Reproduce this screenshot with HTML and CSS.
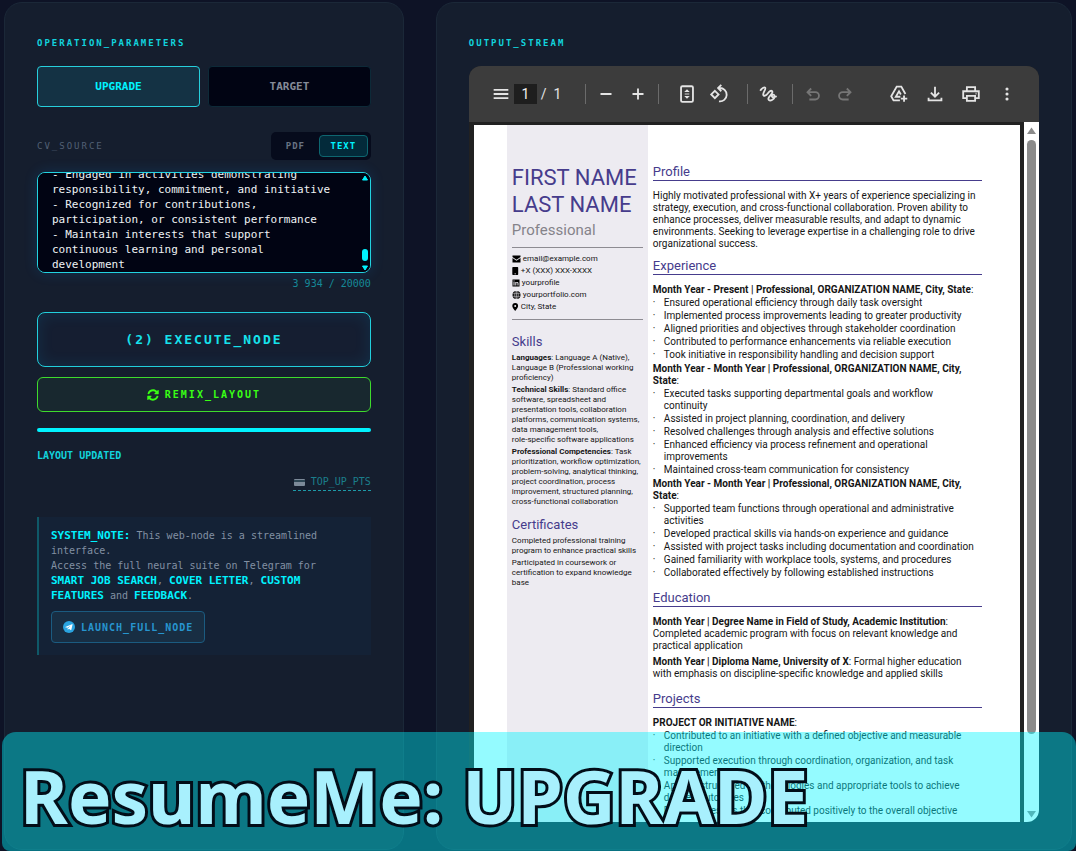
FILE: index.html
```
<!DOCTYPE html>
<html lang="en">
<head>
<meta charset="UTF-8">
<meta name="viewport" content="width=device-width, initial-scale=1.0">
<title>ResumeMe</title>
<link rel="stylesheet" href="styles.css">
</head>
<body>

<div class="app">
    <section class="panel controls">
        <h2 class="panel-title">OPERATION_PARAMETERS</h2>

        <div class="modes">
            <button class="mode active" type="button">UPGRADE</button>
            <button class="mode" type="button">TARGET</button>
        </div>

        <div class="source-row">
            <label for="cv-text">CV_SOURCE</label>
            <div class="toggle">
                <button type="button">PDF</button>
                <button class="active" type="button">TEXT</button>
            </div>
        </div>

        <div class="source-box">
            <textarea id="cv-text" spellcheck="false">- Engaged in activities demonstrating responsibility, commitment, and initiative
- Recognized for contributions, participation, or consistent performance
- Maintain interests that support continuous learning and personal development</textarea>
            <div class="source-scroll">
                <svg width="8" height="6" viewBox="0 0 8 6"><path d="M4 1L6.500 5H1.500z" fill="currentColor" stroke="currentColor" stroke-linejoin="round"/></svg>
                <span class="source-thumb"></span>
                <svg width="8" height="6" viewBox="0 0 8 6"><path d="M4 5L6.500 1H1.500z" fill="currentColor" stroke="currentColor" stroke-linejoin="round"/></svg>
            </div>
        </div>
        <p class="counter">3 934 / 20000</p>

        <button class="execute" type="button">(2) EXECUTE_NODE</button>
        <button class="remix" type="button">
            <svg width="12" height="12" viewBox="0 0 512 512" fill="currentColor"><path d="M105 203c22-62 82-107 151-107 45 0 84 18 113 47l-47 47c-14 14-4 34 14 34h145c11 0 20-9 20-20V59c0-18-21-29-35-15l-39 39C386 41 325 12 256 12 149 12 59 81 26 177c-6 16 3 32 19 36l25 6c15 4 30-3 35-16zM407 309c-22 62-82 107-151 107-45 0-84-18-113-47l47-47c14-14 4-34-14-34H31c-11 0-20 9-20 20v145c0 18 21 29 35 15l39-39c41 42 102 71 171 71 107 0 197-69 230-165 6-16-3-32-19-36l-25-6c-15-4-30 3-35 16z"/></svg>
            <span>REMIX_LAYOUT</span>
        </button>

        <div class="progress"></div>
        <p class="status">LAYOUT UPDATED</p>

        <a class="top-up" href="#">
            <svg width="11" height="7" viewBox="0 0 11 7"><rect width="11" height="7" rx="1" fill="#7c8a99"/><rect y="1" width="11" height="2" fill="#2d4654"/></svg>
            <span>TOP_UP_PTS</span>
        </a>

        <div class="note">
            <p><strong>SYSTEM_NOTE:</strong> This web-node is a streamlined interface.<br>
            Access the full neural suite on Telegram for <strong>SMART JOB SEARCH</strong>, <strong>COVER LETTER</strong>, <strong>CUSTOM FEATURES</strong> and <strong>FEEDBACK</strong>.</p>
            <a class="launch" href="#">
                <svg width="12" height="12" viewBox="0 0 24 24"><circle cx="12" cy="12" r="12" fill="#2aa4e0"/><path d="M4.500 11.800L18 6.300c.8-.2 1.200.2 1 1l-2.300 10.200c-.2.8-.7 1-1.400.6l-3.300-2.500-1.700 1.600c-.4.3-.8.2-.9-.3l-.5-3.400-4.300-1.200c-.6-.2-.6-.4-.1-.5z" fill="#fff"/><path d="M9 13.500l6.500-4.500-5.300 5.300-.4 2.500z" fill="#2aa4e0"/></svg>
                <span>LAUNCH_FULL_NODE</span>
            </a>
        </div>
    </section>

    <section class="panel output">
        <h2 class="panel-title">OUTPUT_STREAM</h2>

        <div class="viewer">
            <div class="toolbar">
                <button type="button" aria-label="Menu"><svg width="24" height="24" viewBox="0 0 24 24"><path d="M4 7.500h16M4 12h16M4 16.500h16"/></svg></button>
                <input class="page-number" type="text" value="1" aria-label="Page number">
                <span class="page-total">/&nbsp; 1</span>
                <span class="divider"></span>
                <button type="button" aria-label="Zoom out"><svg width="24" height="24" viewBox="0 0 24 24"><path d="M6 12h12"/></svg></button>
                <button type="button" aria-label="Zoom in"><svg width="24" height="24" viewBox="0 0 24 24"><path d="M6 12h12M12 6v12"/></svg></button>
                <span class="divider"></span>
                <button class="fit" type="button" aria-label="Fit to page"><svg width="24" height="24" viewBox="0 0 24 24"><rect x="5.500" y="3.500" width="13" height="17" rx="1.500"/><path d="M9.500 12h5" stroke-width="1"/><path d="M9 9.700h6l-3-3zM9 14.300h6l-3 3z" class="solid"/></svg></button>
                <button class="rotate" type="button" aria-label="Rotate"><svg width="24" height="24" viewBox="0 0 24 24"><path d="M7.500 8.500l4 4-4 4-4-4z"/><path d="M11 5.500h1.500a7.300 7.300 0 1 1-.5 14.500M14.500 2L11 5.500 14.500 9"/></svg></button>
                <span class="divider"></span>
                <button class="draw" type="button" aria-label="Draw"><svg width="24" height="24" viewBox="0 0 24 24"><path d="M3.500 8.500C5 6 8 4 9 5.200s-2.800 6-2.200 7.800 3 .8 4.700-1.300 3.500-4 4.800-2.900-.3 3.400-1.900 5-2.800 4-1.200 5 6-1.300 6-4-2.800-2.600-3-.8 2.400 2 5.300.5"/></svg></button>
                <span class="divider"></span>
                <button class="dim" type="button" aria-label="Undo"><svg width="24" height="24" viewBox="0 0 24 24"><path d="M10 6l-4 4 4 4M6 10h8.500a4 4 0 0 1 0 8H8"/></svg></button>
                <button class="dim" type="button" aria-label="Redo"><svg width="24" height="24" viewBox="0 0 24 24"><path d="M14 6l4 4-4 4M18 10H9.500a4 4 0 0 0 0 8H16"/></svg></button>
                <span class="spacer"></span>
                <button type="button" aria-label="Save to Drive"><svg width="24" height="24" viewBox="0 0 24 24"><path d="M13 19H6l-2.500-4.500L9.500 4h5l4.500 8"/><path d="M13.500 15H8.500l3.500-6 2 3.500M17.500 13.500v7M14 17h7"/></svg></button>
                <button type="button" aria-label="Download"><svg width="24" height="24" viewBox="0 0 24 24"><path d="M12 4v11M7.500 10.500L12 15l4.500-4.500M5 16v3h14v-3"/></svg></button>
                <button type="button" aria-label="Print"><svg width="24" height="24" viewBox="0 0 24 24"><path d="M7.500 8V4.500h9V8M7 16.500H3.500V9h17v7.500H17"/><path d="M7.500 14h9v5.500h-9zM17 11.500h1"/></svg></button>
                <button type="button" aria-label="More"><svg width="24" height="24" viewBox="0 0 24 24"><g class="solid"><circle cx="12" cy="6.500" r="1.700"/><circle cx="12" cy="12" r="1.700"/><circle cx="12" cy="17.500" r="1.700"/></g></svg></button>
            </div>

            <div class="stage">
                <article class="page">
                    <aside class="side">
                        <h1>FIRST NAME LAST NAME</h1>
                        <p class="job-title">Professional</p>
                        <ul class="contacts">
                            <li><svg width="9" height="8" viewBox="0 0 9 8"><path d="M0.500 0.500h8v1.500l-4 2.800-4-2.800zM0.500 3l4 2.800 4-2.800v4.500h-8z"/></svg>email@example.com</li>
                            <li><svg width="7" height="8" viewBox="0 0 7 8"><path d="M1 0h4.500q.7 0 .7.700v6.600q0 .7-.7.700H1q-.7 0-.7-.7V.700Q.3 0 1 0zM2.500 6.500v.7H4v-.7z"/></svg>+X (XXX) XXX-XXXX</li>
                            <li><svg width="8" height="8" viewBox="0 0 8 8"><path fill-rule="evenodd" d="M0.500 0.500h7v7h-7zM1.500 3v3.500h1V3zM1.500 1.500v1h1v-1zM3.300 3v3.500h1V4.300q.3-.5.7-.5.500 0 .5.700v2h1V4.200Q6.300 3 5.300 3q-.6 0-1 .5V3z"/></svg>yourprofile</li>
                            <li><svg width="9" height="8" viewBox="0 0 9 8"><circle cx="4.500" cy="4" r="4"/><path d="M.5 2.700h8M.5 5.300h8M4.500 0v8" stroke="#edebf1" stroke-width=".5"/><ellipse cx="4.500" cy="4" rx="1.800" ry="4" fill="none" stroke="#edebf1" stroke-width=".5"/></svg>yourportfolio.com</li>
                            <li><svg width="7" height="8" viewBox="0 0 7 8"><path fill-rule="evenodd" d="M3.200 8C1.500 5.800.3 4.500.3 3a2.900 2.900 0 0 1 5.800 0C6.100 4.500 4.900 5.800 3.200 8zM3.200 2a1 1 0 1 0 0 2 1 1 0 0 0 0-2z"/></svg>City, State</li>
                        </ul>

                        <h3>Skills</h3>
                        <p><b>Languages</b>: Language A (Native), Language B (Professional working proficiency)</p>
                        <p><b>Technical Skills</b>: Standard office software, spreadsheet and presentation tools, collaboration platforms, communication systems, data management tools, <span class="keep">role-specific software applications</span></p>
                        <p><b>Professional Competencies</b>: Task prioritization, workflow optimization, problem-solving, analytical thinking, project coordination, process improvement, structured planning, cross-functional collaboration</p>

                        <h3>Certificates</h3>
                        <p>Completed professional training program to enhance practical skills</p>
                        <p>Participated in coursework or certification to expand knowledge base</p>
                    </aside>

                    <div class="main">
                        <h3>Profile</h3>
                        <p>Highly motivated professional with X+ years of experience specializing in strategy, execution, and cross-functional collaboration. Proven ability to enhance processes, deliver measurable results, and adapt to dynamic environments. Seeking to leverage expertise in a challenging role to drive organizational success.</p>

                        <h3>Experience</h3>
                        <h4>Month Year - Present | Professional, ORGANIZATION NAME, City, State<span>:</span></h4>
                        <ul>
                            <li>Ensured operational efficiency through daily task oversight</li>
                            <li>Implemented process improvements leading to greater productivity</li>
                            <li>Aligned priorities and objectives through stakeholder coordination</li>
                            <li>Contributed to performance enhancements via reliable execution</li>
                            <li>Took initiative in responsibility handling and decision support</li>
                        </ul>
                        <h4>Month Year - Month Year | Professional, ORGANIZATION NAME, City, State<span>:</span></h4>
                        <ul>
                            <li>Executed tasks supporting departmental goals and workflow continuity</li>
                            <li>Assisted in project planning, coordination, and delivery</li>
                            <li>Resolved challenges through analysis and effective solutions</li>
                            <li>Enhanced efficiency via process refinement and operational improvements</li>
                            <li>Maintained cross-team communication for consistency</li>
                        </ul>
                        <h4>Month Year - Month Year | Professional, ORGANIZATION NAME, City, State<span>:</span></h4>
                        <ul>
                            <li>Supported team functions through operational and administrative activities</li>
                            <li>Developed practical skills via hands-on experience and guidance</li>
                            <li>Assisted with project tasks including documentation and coordination</li>
                            <li>Gained familiarity with workplace tools, systems, and procedures</li>
                            <li>Collaborated effectively by following established instructions</li>
                        </ul>

                        <h3>Education</h3>
                        <p class="school"><b>Month Year | Degree Name in Field of Study, Academic Institution</b>: Completed academic program with focus on relevant knowledge and practical application</p>
                        <p class="school"><b>Month Year | Diploma Name, University of X</b>: Formal higher education with emphasis on discipline-specific knowledge and applied skills</p>

                        <h3>Projects</h3>
                        <h4>PROJECT OR INITIATIVE NAME<span>:</span></h4>
                        <ul>
                            <li>Contributed to an initiative with a defined objective and measurable direction</li>
                            <li>Supported execution through coordination, organization, and task management</li>
                            <li>Applied structured methodologies and appropriate tools to achieve defined outcomes</li>
                            <li>Delivered results that contributed positively to the overall objective</li>
                        </ul>
                    </div>
                </article>
                <div class="page-scroll">
                    <svg width="9" height="7" viewBox="0 0 9 7"><path d="M4.500 0.500L9 7H0z"/></svg>
                    <span class="page-thumb"></span>
                    <svg width="9" height="7" viewBox="0 0 9 7"><path d="M4.500 6.500L9 0H0z"/></svg>
                </div>
            </div>
        </div>
    </section>
</div>

<div class="banner">ResumeMe: UPGRADE</div>

<script>
    // keep the end of the pasted CV in view
    var cvText = document.getElementById("cv-text");
    cvText.scrollTop = cvText.scrollHeight;
</script>

</body>
</html>
```
FILE: styles.css
```
* {
    box-sizing: border-box;
}
body {
    margin: 0;
    background-color: #0e1326;
    font-family: "DejaVu Sans Mono", monospace;
    font-size: 10px;
    color: #8290a3;
}
h1, h2, h3, h4, p, ul {
    margin: 0;
    padding: 0;
}
button {
    font-family: inherit;
    padding: 0;
    cursor: pointer;
}
a {
    text-decoration: none;
}
.app {
    display: grid;
    grid-template-columns: 22fr 35fr;
    gap: 32px;
    height: 100vh;
    padding: 2px 4px 1px;
}
.panel {
    display: flex;
    flex-direction: column;
    min-width: 0;
    min-height: 0;
    padding: 32px 32px 27px;
    border: 1px solid #1b2838;
    border-radius: 18px;
    background-color: #151e2e;
}
.panel-title {
    margin-bottom: 15px;
    font-size: 9px;
    line-height: 16px;
    letter-spacing: 2px;
    color: #12d3dd;
}

/* left panel */
.modes {
    display: grid;
    grid-template-columns: 1fr 1fr;
    gap: 8px;
}
.mode {
    height: 41px;
    border: 1px solid #0d2a38;
    border-radius: 4px;
    background-color: #010413;
    color: #858b98;
    font-size: 11px;
    font-weight: bold;
}
.mode.active {
    border-color: #27cfdc;
    background-color: #143244;
    color: #00f3ff;
}
.source-row {
    display: flex;
    justify-content: space-between;
    align-items: center;
    margin: 25px 0 12px;
    font-size: 9px;
    letter-spacing: 2px;
    color: #526075;
}
.toggle {
    display: flex;
    gap: 2px;
    padding: 3px;
    border-radius: 5px;
    background-color: #060b1c;
}
.toggle button {
    width: 43px;
    height: 22px;
    border: 1px solid transparent;
    border-radius: 4px;
    background: none;
    color: #697383;
    font-size: 9px;
    font-weight: bold;
    letter-spacing: 1px;
}
.toggle button.active {
    width: 49px;
    border-color: #0e6670;
    background-color: #032a3a;
    color: #00f3ff;
}
.source-box {
    position: relative;
    height: 101px;
    border-radius: 8px;
    box-shadow: 0 0 14px rgba(0, 140, 255, 0.16);
}
.source-box textarea {
    display: block;
    width: 100%;
    height: 100%;
    padding: 0 33px 0 14px;
    border: 1px solid #22d3e0;
    border-radius: 8px;
    outline: none;
    resize: none;
    scrollbar-width: none;
    background-color: #010413;
    color: #eef2f4;
    font-family: inherit;
    font-size: 11px;
    line-height: 15px;
}
.source-scroll {
    position: absolute;
    top: 3px;
    right: 2px;
    bottom: 2px;
    display: flex;
    flex-direction: column;
    align-items: center;
    gap: 4px;
    color: #00f3ff;
}
.source-thumb {
    width: 6px;
    height: 12px;
    margin-top: auto;
    border-radius: 3px;
    background-color: #00f3ff;
}
.counter {
    margin: 4px 0 21px;
    line-height: 14px;
    text-align: right;
    color: #168a98;
}
.execute {
    height: 55px;
    margin-bottom: 10px;
    border: 1px solid #22cfdc;
    border-radius: 8px;
    background-color: #151e31;
    box-shadow: inset 0 0 16px rgba(0, 180, 255, 0.12);
    color: #16e2ec;
    font-size: 13px;
    font-weight: bold;
    letter-spacing: 2px;
}
.remix {
    display: flex;
    justify-content: center;
    align-items: center;
    gap: 6px;
    height: 35px;
    border: 1px solid #3edb2d;
    border-radius: 6px;
    background-color: #18282f;
    color: #39ff14;
    font-size: 10px;
    font-weight: bold;
    letter-spacing: 2px;
}
.progress {
    height: 4px;
    margin: 16px 0;
    border-radius: 2px;
    background-color: #00f3ff;
}
.status {
    line-height: 16px;
    color: #12d3dd;
    font-weight: bold;
}
.top-up {
    display: flex;
    align-items: center;
    align-self: flex-end;
    gap: 6px;
    margin: 10px 0 26px;
    padding-left: 1px;
    border-bottom: 1px dashed #1d9aa8;
    line-height: 16px;
    color: #1b7e8c;
}
.note {
    padding: 11px 28px 12px 12px;
    border-left: 2px solid #0f5968;
    background-color: #142236;
}
.note p {
    margin-bottom: 8px;
    line-height: 15px;
}
.note strong {
    font-size: 11px;
    line-height: 14px;
    color: #00f3ff;
}
.launch {
    display: inline-flex;
    align-items: center;
    gap: 6px;
    height: 32px;
    padding: 0 11px;
    border: 1px solid #1b5b80;
    border-radius: 4px;
    background-color: #182e43;
    color: #2795cf;
    font-weight: bold;
    letter-spacing: 1px;
}

/* pdf viewer */
.viewer {
    display: flex;
    flex-direction: column;
    flex: 1;
    min-height: 0;
    overflow: hidden;
    border-radius: 12px;
    background-color: #212121;
    font-family: Roboto, sans-serif;
}
.toolbar {
    display: flex;
    align-items: center;
    flex: none;
    height: 56px;
    padding: 0 22px 0 20px;
    background-color: #3c3c3c;
    color: #e4e4e4;
}
.toolbar button {
    flex: none;
    width: 24px;
    height: 24px;
    margin-right: 8px;
    border: 0;
    background: none;
    color: #e4e4e4;
}
.toolbar button:first-child {
    margin-right: 1px;
}
.toolbar button:last-child {
    margin-right: -2px;
}
.toolbar button:nth-last-child(-n+4):not(:last-child) {
    margin-right: 12px;
}
.toolbar .dim {
    color: #767676;
}
.toolbar .fit {
    margin-left: 8px;
}
.toolbar .rotate {
    margin-right: 16px;
}
.toolbar .draw {
    margin-right: 12px;
}
.toolbar svg {
    display: block;
    width: 22px;
    height: 22px;
    margin: 1px;
    fill: none;
    stroke: currentColor;
    stroke-width: 2;
}
.toolbar .solid {
    fill: currentColor;
    stroke: none;
}
.page-number {
    width: 23px;
    height: 20px;
    padding: 0;
    border: 0;
    background-color: #1e1e1e;
    color: #f1f1f1;
    font-family: inherit;
    font-size: 14px;
    text-align: center;
}
.page-total {
    margin: 0 24px 0 4px;
    font-size: 14px;
}
.divider {
    width: 1px;
    height: 20px;
    margin-right: 8px;
    background-color: #6b6b6b;
}
.spacer {
    flex: 1;
}
.stage {
    display: flex;
    flex: 1;
    min-height: 0;
    gap: 4px;
    padding-left: 5px;
}
.page {
    display: grid;
    grid-template-columns: 141px 1fr;
    flex: 1;
    margin-top: 3px;
    padding: 0 38px 0 33px;
    overflow: hidden;
    background-color: #fff;
    color: #151515;
}
.page h3 {
    font-size: 13px;
    font-weight: normal;
    line-height: 16px;
    color: #463c8c;
}
.page ul {
    list-style: none;
}
.side {
    padding: 39px 5px 0;
    background-color: #edebf1;
    font-size: 8px;
    line-height: 10px;
}
.side h1 {
    font-size: 22px;
    font-weight: normal;
    line-height: 27px;
    color: #463c8c;
}
.side .job-title {
    margin: 0;
    padding: 3px 0 8px;
    border-bottom: 1px solid #8d8b92;
    font-size: 15px;
    line-height: 18px;
    color: #85838a;
}
.side .contacts {
    margin-bottom: 14px;
    padding: 5px 0 6px;
    border-bottom: 1px solid #8d8b92;
    line-height: 12px;
}
.contacts li {
    display: flex;
    align-items: center;
    gap: 2px;
}
.side h3 {
    margin: 10px 0 3px;
}
.side p {
    margin-bottom: 2px;
}
.keep {
    white-space: nowrap;
}
.main {
    padding: 39px 0 0 5px;
    font-size: 10px;
    line-height: 12px;
}
.main h3 {
    margin: 8px 0 9px;
    border-bottom: 1px solid #463c8c;
}
.main h3:first-child {
    margin-top: 0;
}
.main ul + h3,
.main .school + h3 {
    margin-top: 11px;
}
.main h4 {
    margin: 2px 0 1px;
    font-size: 10px;
}
.main h4 span {
    font-weight: normal;
}
.main li {
    display: flex;
    margin-bottom: 1px;
    padding-right: 5px;
}
.main li::before {
    content: "·";
    flex: none;
    width: 11px;
}
.main .school {
    margin-bottom: 4px;
}
.page-scroll {
    display: flex;
    flex-direction: column;
    align-items: center;
    width: 15px;
    padding: 5px 0 4px;
    background-color: #fff;
    fill: #8b8b8b;
}
.page-thumb {
    width: 9px;
    height: 86%;
    margin: 6px 0 auto;
    border-radius: 5px;
    background-color: #8b8b8b;
}

/* caption over the bottom of the screen */
.banner {
    position: fixed;
    left: 2px;
    right: 0;
    bottom: 0;
    height: 119px;
    padding: 12px 18px 0;
    border-radius: 14px 14px 8px 8px;
    background-color: rgba(0, 245, 255, 0.42);
    color: #a8f0fd;
    font-family: "Noto Sans", "Open Sans", sans-serif;
    font-size: 73px;
    font-weight: bold;
    line-height: 104px;
    white-space: nowrap;
    -webkit-text-stroke: 6px #020d18;
    paint-order: stroke fill;
}
```
